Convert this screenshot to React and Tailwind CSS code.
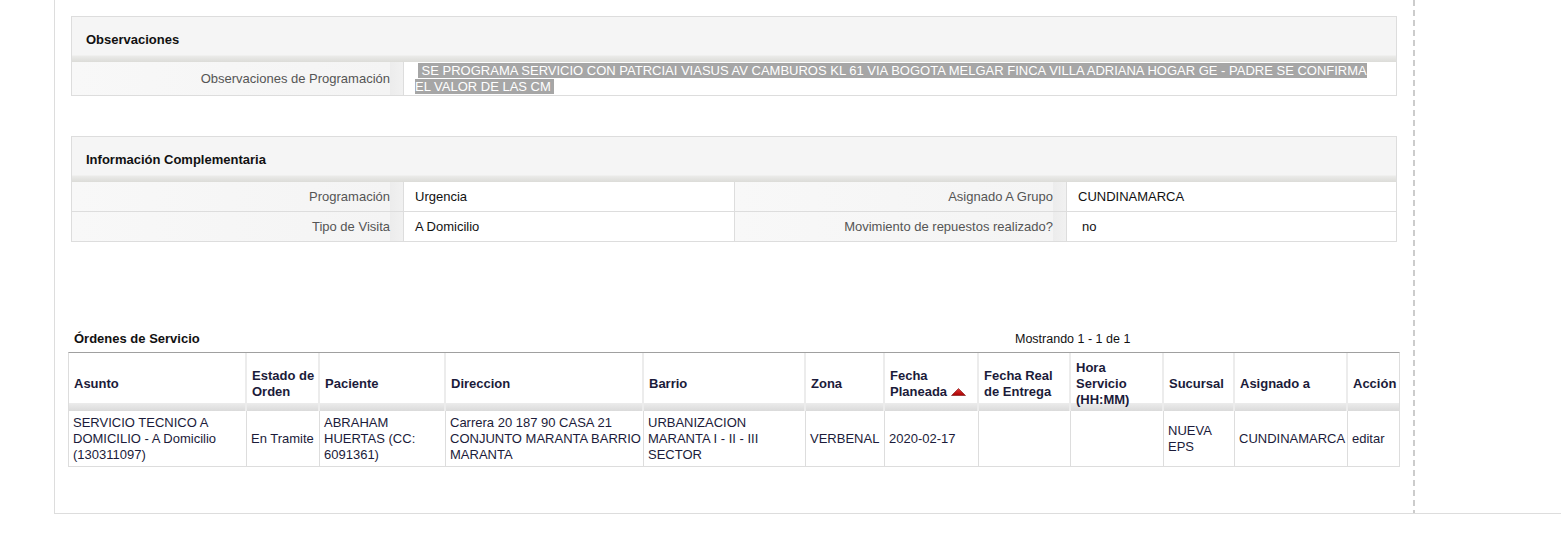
import React from 'react';

const font = { fontFamily: '"Liberation Sans", Arial, sans-serif' };

const PanelHeader = ({ title }) => (
    <div className="h-[45px] bg-[linear-gradient(to_bottom,#f5f5f5_0,#f5f5f5_38px,#ebebe9_39px,#dcdcd8_45px)] pl-[14px] pt-[15px] text-[13px] leading-[16px] font-bold text-[#111]">
        {title}
    </div>
);

const Label = ({ children, className = '' }) => (
    <div className={`flex items-center justify-end pr-[13px] text-[13px] text-[#555] border-r border-[#ddd] bg-[linear-gradient(to_right,#f8f8f8_0,#f4f4f4_96%,#ececec_96%,#f1f1f1_100%)] ${className}`}>
        {children}
    </div>
);

const Value = ({ children, className = '' }) => (
    <div className={`flex items-center pl-[11px] text-[13px] text-[#111] ${className}`}>{children}</div>
);

const columns = [
    { label: 'Asunto', w: 'w-[178px]' },
    { label: <>Estado de<br />Orden</>, w: 'w-[73px]' },
    { label: 'Paciente', w: 'w-[126px]' },
    { label: 'Direccion', w: 'w-[198px]' },
    { label: 'Barrio', w: 'w-[162px]' },
    { label: 'Zona', w: 'w-[79px]' },
    { label: 'Fecha Planeada', w: 'w-[94px]', sort: true },
    { label: <>Fecha Real<br />de Entrega</>, w: 'w-[92px]' },
    { label: <>Hora<br />Servicio<br />(HH:MM)</>, w: 'w-[93px]' },
    { label: 'Sucursal', w: 'w-[71px]' },
    { label: 'Asignado a', w: 'w-[113px]' },
    { label: 'Acción', w: 'w-[51px]' },
];

const row = [
    <>SERVICIO TECNICO A<br />DOMICILIO - A Domicilio<br />(130311097)</>,
    'En Tramite',
    <>ABRAHAM<br />HUERTAS (CC:<br />6091361)</>,
    <>Carrera 20 187 90 CASA 21<br />CONJUNTO MARANTA BARRIO<br />MARANTA</>,
    <>URBANIZACION<br />MARANTA I - II - III<br />SECTOR</>,
    'VERBENAL',
    '2020-02-17',
    '',
    '',
    <>NUEVA<br />EPS</>,
    'CUNDINAMARCA',
    'editar',
];

const SortArrow = () => (
    <svg width="15" height="8" viewBox="0 0 15 8" className="inline-block ml-[4px] mb-[1px]">
        <defs>
            <linearGradient id="sortg" x1="0" y1="0" x2="0" y2="1">
                <stop offset="0" stopColor="#e23a3a" />
                <stop offset="1" stopColor="#a80000" />
            </linearGradient>
        </defs>
        <polygon points="7.5,0.5 14.5,7.5 0.5,7.5" fill="url(#sortg)" stroke="#7a1010" strokeWidth="0.6" />
    </svg>
);

export default function App() {
    return (
        <div className="bg-white w-[1561px] h-[545px]" style={font}>
            <div className="ml-[54px] h-[514px] flex border-l border-b border-[#ddd]">
                {/* main content */}
                <div className="w-[1358px] pt-[16px] pl-[16px] pr-[16px]">
                    {/* Observaciones */}
                    <div className="border border-[#ddd]">
                        <PanelHeader title="Observaciones" />
                        <div className="flex h-[33px]">
                            <Label className="w-[332px]">Observaciones de Programación</Label>
                            <div className="flex-1 pl-[11px] pt-[1px] pr-[12px] text-[13px] leading-[16px] text-white">
                                <span className="bg-[#a6a6a6] ml-[3px]">
                                    {'\u00a0SE PROGRAMA SERVICIO CON PATRCIAI VIASUS AV CAMBUROS KL 61 VIA BOGOTA MELGAR FINCA VILLA ADRIANA HOGAR GE - PADRE SE CONFIRMA EL VALOR DE LAS CM\u00a0'}
                                </span>
                            </div>
                        </div>
                    </div>

                    {/* Informacion Complementaria */}
                    <div className="mt-[40px] border border-[#ddd]">
                        <PanelHeader title="Información Complementaria" />
                        <div className="grid grid-cols-[332px_331px_332px_1fr]">
                            <Label className="h-[30px] border-b">Programación</Label>
                            <Value className="h-[30px] border-b border-r border-[#ddd]">Urgencia</Value>
                            <Label className="h-[30px] border-b">Asignado A Grupo</Label>
                            <Value className="h-[30px] border-b border-[#ddd]">CUNDINAMARCA</Value>
                            <Label className="h-[29px]">Tipo de Visita</Label>
                            <Value className="h-[29px] border-r border-[#ddd]">A Domicilio</Value>
                            <Label className="h-[29px]">Movimiento de repuestos realizado?</Label>
                            <Value className="h-[29px] pl-[15px]">no</Value>
                        </div>
                    </div>

                    {/* Ordenes de Servicio */}
                    <div className="-ml-[3px] w-[1332px] mt-[88px]">
                        <div className="flex h-[22px] pt-[1px] text-[#111]">
                            <div className="w-[947px] pl-[6px] text-[13px] leading-[16px] font-bold">Órdenes de Servicio</div>
                            <div className="text-[12.5px] leading-[16px]">Mostrando 1 - 1 de 1</div>
                        </div>
                        <div className="border-t border-t-[#a0a0a0] border-x border-b border-[#ddd] text-[#1b1b3a]">
                            <div className="flex h-[58px] bg-[linear-gradient(to_bottom,#fff_0,#fff_50px,#ececec_50px,#dadada_58px)]">
                                {columns.map((c, i) => (
                                    <div
                                        key={i}
                                        className={`${c.w} flex items-center pl-[5px] pt-[3px] text-[13px] leading-[16px] font-bold ${i < columns.length - 1 ? 'border-r-2 border-r-[#ececec]' : ''}`}
                                    >
                                        <div>
                                            {c.sort ? (<>Fecha<br />Planeada<SortArrow /></>) : c.label}
                                        </div>
                                    </div>
                                ))}
                            </div>
                            <div className="flex h-[55px]">
                                {row.map((cell, i) => (
                                    <div
                                        key={i}
                                        className={`${columns[i].w} flex items-center pl-[4px] text-[13px] leading-[16px] ${i < row.length - 1 ? 'border-r border-[#ddd]' : ''}`}
                                    >
                                        <div>{cell}</div>
                                    </div>
                                ))}
                            </div>
                        </div>
                    </div>
                </div>
                {/* dashed divider */}
                <div className="w-[2px] h-full bg-[repeating-linear-gradient(to_bottom,#cccccc_0,#cccccc_6px,transparent_6px,transparent_10px)]" />
                <div className="flex-1" />
            </div>
        </div>
    );
}
